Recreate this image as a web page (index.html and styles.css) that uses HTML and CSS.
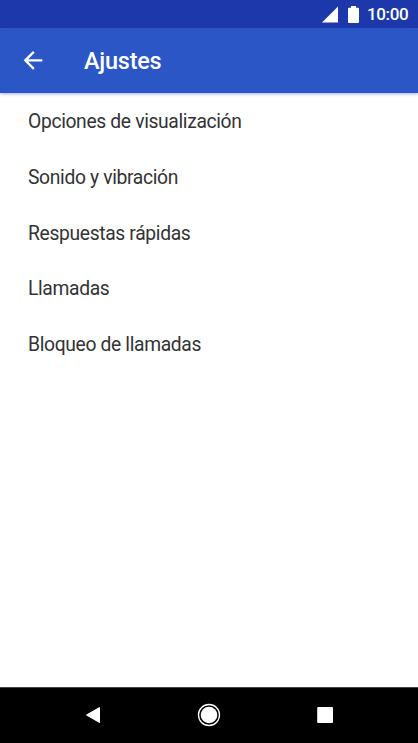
FILE: index.html
```html
<!DOCTYPE html>
<html lang="es">
<head>
    <meta charset="UTF-8">
    <meta name="viewport" content="width=device-width, initial-scale=1.0">
    <title>Ajustes</title>
    <link rel="stylesheet" href="styles.css">
</head>
<body>
    <div class="screen">
        <div class="status">
            <svg class="signal" width="17" height="17" viewBox="0 0 17 17"><path d="M16 0.500v16H0z"/></svg>
            <svg class="battery" width="11" height="17" viewBox="0 0 11 17"><path d="M3 0h5v1.700h2a1 1 0 0 1 1 1V16a1 1 0 0 1-1 1H1a1 1 0 0 1-1-1V2.700a1 1 0 0 1 1-1h2z"/></svg>
            <span class="time">10:00</span>
        </div>
        <header class="toolbar">
            <svg class="back" width="28" height="28" viewBox="0 0 24 24"><path d="M20 11.300H7.830l5.590-5.590L12 4.300l-8 8 8 8 1.410-1.410L7.830 13.300H20v-2z"/></svg>
            <h1>Ajustes</h1>
        </header>
        <ul class="list">
            <li>Opciones de visualización</li>
            <li>Sonido y vibración</li>
            <li>Respuestas rápidas</li>
            <li>Llamadas</li>
            <li>Bloqueo de llamadas</li>
        </ul>
        <nav class="navbar">
            <svg width="24" height="24" viewBox="0 0 24 24"><path d="M18.500 4.500v15L5.500 12z" stroke="#fff" stroke-linejoin="round"/></svg>
            <svg width="24" height="24" viewBox="0 0 24 24"><circle cx="12" cy="12" r="8.300"/><circle class="ring" cx="12" cy="12" r="10.500"/></svg>
            <svg width="24" height="24" viewBox="0 0 24 24"><rect x="4.200" y="4" width="15.800" height="16" rx="1"/></svg>
        </nav>
    </div>
</body>
</html>
```
FILE: styles.css
```css
*{
    padding: 0;
    margin: 0;
    box-sizing: border-box;
}
body{
    font-family: Roboto, "Liberation Sans", sans-serif;
    background-color: #fff;
}
ul{
    list-style: none;
}
svg{
    display: block;
    fill: #fff;
}
.screen{
    display: flex;
    flex-direction: column;
    height: 743px;
    overflow: hidden;
}
.status{
    display: flex;
    justify-content: flex-end;
    align-items: center;
    height: 28px;
    padding-right: 9px;
    background-color: #1c38ab;
    color: #fff;
}
.battery{
    margin: 0 8px 0 9px;
}
.time{
    width: 42px;
    padding-top: 1px;
    font-size: 17px;
    font-weight: 500;
    line-height: 27px;
    letter-spacing: -0.350px;
}
.toolbar{
    display: flex;
    align-items: center;
    height: 65px;
    padding: 0 0 1px 18.500px;
    background-color: #2a56c6;
    color: #fff;
    box-shadow: 0 1px 3px rgba(42, 86, 198, 0.450);
}
.toolbar h1{
    margin-left: 37.500px;
    padding-top: 1px;
    font-size: 23.500px;
    font-weight: 500;
    letter-spacing: -0.250px;
}
.list{
    flex: 1;
    padding-top: 1px;
}
.list li{
    height: 55.800px;
    padding-left: 28px;
    font-size: 19.300px;
    line-height: 55.800px;
    letter-spacing: -0.350px;
    color: #333;
}
.navbar{
    display: flex;
    justify-content: center;
    align-items: center;
    gap: 92px;
    height: 56px;
    padding-bottom: 1px;
    border-top: 1px solid #444;
    background-color: #000;
}
.ring{
    fill: none;
    stroke: #fff;
    stroke-width: 1.300;
}
```
